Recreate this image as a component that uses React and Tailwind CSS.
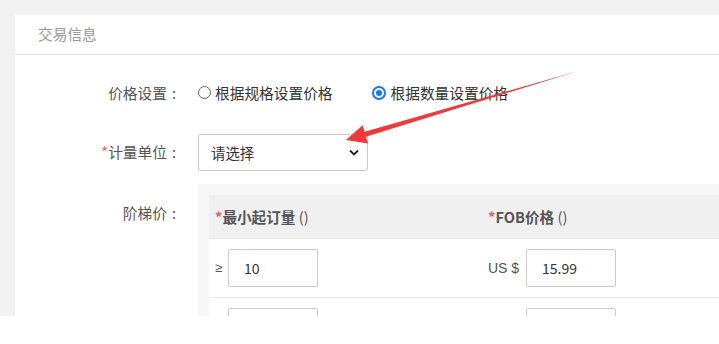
import React from 'react';

const font = { fontFamily: '"Noto Sans CJK SC", "Liberation Sans", sans-serif' };
const latin = { fontFamily: '"Liberation Sans", sans-serif' };

function Radio({ checked }) {
  if (checked) {
    return (
      <span className="flex h-[14px] w-[14px] items-center justify-center rounded-full border-2 border-[#1677ff] bg-white">
        <span className="h-[6px] w-[6px] rounded-full bg-[#1677ff]" />
      </span>
    );
  }
  return <span className="h-[13px] w-[13px] rounded-full border border-[#666] bg-white" />;
}

function Input({ value }) {
  return (
    <div className="flex h-[38px] w-[90px] items-center rounded-[2px] border border-[#ccc] bg-white pl-[15px] text-[14px] text-[#333]">
      {value}
    </div>
  );
}

function Req() {
  return <span className="text-[#f25b5b]">*</span>;
}

function Label({ required, text, className = '' }) {
  return (
    <div className={`w-[183px] pr-[22px] text-right text-[14.7px] text-[#555] ${className}`}>
      {required && <Req />}
      {text}
      <span className="ml-[5px]">:</span>
    </div>
  );
}

export default function App() {
  return (
    <div className="relative h-[316px] overflow-hidden bg-[#f2f2f2] pl-[15px] pt-[15px]" style={font}>
      <div className="h-full bg-white">
        {/* header */}
        <div className="flex h-[40px] items-center border-b border-[#e6e6e6] pl-[23px] text-[14.7px] text-[#999]">
          交易信息
        </div>

        {/* 价格设置 */}
        <div className="mt-[20px] flex h-[36px] items-center">
          <Label text="价格设置" />
          <label className="flex items-center gap-[4px] text-[14.7px] text-[#333]">
            <Radio />
            根据规格设置价格
          </label>
          <label className="ml-[39px] flex items-center gap-[5px] text-[14.7px] text-[#333]">
            <Radio checked />
            根据数量设置价格
          </label>
        </div>

        {/* 计量单位 */}
        <div className="mt-[23px] flex items-center">
          <Label required text="计量单位" />
          <div className="flex h-[37px] w-[170px] items-center justify-between rounded-[2px] border border-[#ccc] bg-white pl-[12px] pr-[8px] text-[14.4px] text-[#333]">
            请选择
            <svg width="10" height="7" viewBox="0 0 10 7">
              <path d="M1 1.5 L5 5.5 L9 1.5" fill="none" stroke="#222" strokeWidth="1.8" />
            </svg>
          </div>
        </div>

        {/* 阶梯价 */}
        <div className="mt-[13px] flex">
          <Label text="阶梯价" className="pt-[19px] leading-[20px]" />
          <div className="flex-1 bg-[#f7f7f7] pl-[11px] pt-[11px]">
            <div className="flex h-[44px] items-center border-b border-[#ebebeb] bg-[#f0f0f0] text-[14.6px] font-bold text-[#555]">
              <div className="w-[273px] pl-[6px]">
                <Req />最小起订量 <span className="font-normal">()</span>
              </div>
              <div className="pl-[6px]">
                <Req />FOB价格 <span className="font-normal">()</span>
              </div>
            </div>
            {['10', ''].map((qty, i) => (
              <div key={i} className="flex items-center border-b border-[#ebebeb] bg-white py-[10px]">
                <div className="flex w-[273px] items-center pl-[6px]">
                  <span className="w-[13px] text-[13px] text-[#555]" style={latin}>
                    {i === 0 ? '≥' : ''}
                  </span>
                  <Input value={qty} />
                </div>
                <div className="flex items-center pl-[6px]">
                  <span className="w-[38px] text-[14px] text-[#555]" style={latin}>
                    {i === 0 ? 'US $' : ''}
                  </span>
                  <Input value={i === 0 ? '15.99' : ''} />
                </div>
              </div>
            ))}
          </div>
        </div>
      </div>

      {/* annotation arrow */}
      <svg className="pointer-events-none absolute left-0 top-0" width="719" height="316">
        <polygon
          points="346,140 362.6,125.2 364.6,131.8 578,71 365.9,136.8 368,143.5"
          fill="#f03a3a"
        />
      </svg>
    </div>
  );
}
